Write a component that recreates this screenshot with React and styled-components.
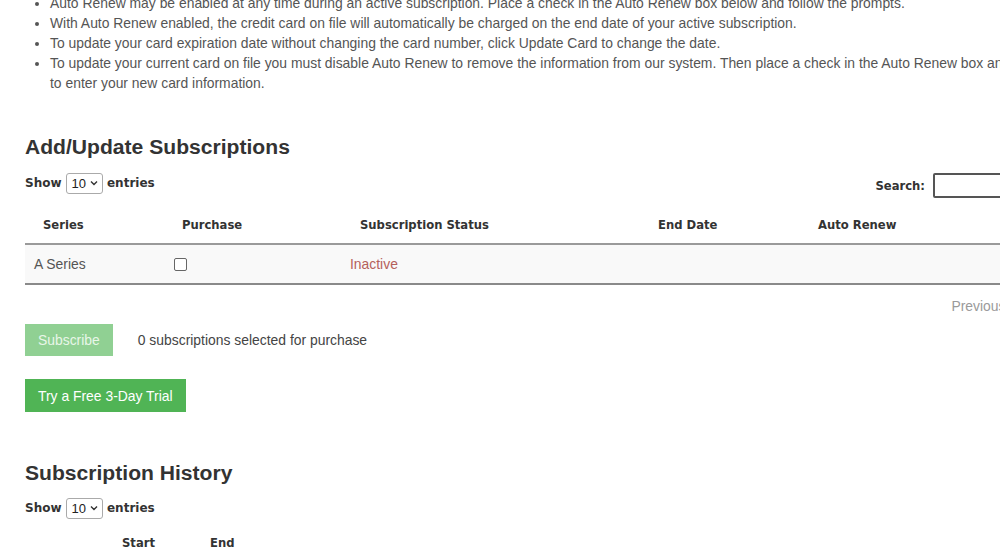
import React from "react";
import styled, { createGlobalStyle } from "styled-components";

const Global = createGlobalStyle`
  html, body { margin: 0; padding: 0; background: #fff; overflow: hidden; }
  body { font-family: "Liberation Sans", Arial, sans-serif; color: #333; }
`;

const Page = styled.div`
  width: 1140px;
  padding: 0 0 0 25px;
  box-sizing: border-box;
`;

const Notes = styled.ul`
  margin: -7px 0 0 0;
  padding: 0 8px 0 25px;
  font-size: 13.9px;
  line-height: 20px;
  color: #555;
`;

const Heading = styled.h2`
  margin: ${(p) => p.$top}px 0 0 0;
  font-family: "Liberation Sans", Arial, sans-serif;
  font-size: 21.1px;
  font-weight: bold;
  line-height: 24px;
  color: #333;
`;

const Controls = styled.div`
  display: flex;
  align-items: center;
  justify-content: space-between;
  margin-top: ${(p) => p.$top}px;
  height: 24px;
`;

const LengthLabel = styled.label`
  display: flex;
  align-items: center;
  gap: 4px;
  font-family: "DejaVu Sans", Verdana, sans-serif;
  font-size: 12px;
  font-weight: bold;
  color: #333;
`;

const FakeSelect = styled.span`
  display: inline-flex;
  align-items: center;
  gap: 4px;
  height: 19px;
  padding: 0 4px 0 5px;
  border: 1px solid #aaa;
  border-radius: 3px;
  font-family: "Liberation Sans", Arial, sans-serif;
  font-size: 13px;
  font-weight: normal;
  color: #222;
  background: #fff;
`;

const SearchLabel = styled.label`
  display: flex;
  align-items: center;
  gap: 8px;
  margin-top: 5px;
  font-family: "DejaVu Sans", Verdana, sans-serif;
  font-size: 11.6px;
  font-weight: bold;
  color: #333;
`;

const SearchInput = styled.span`
  display: block;
  width: 203px;
  height: 21px;
  border: 2px solid #555;
  border-radius: 2px;
  background: #fff;
`;

const Table = styled.div`
  margin-top: ${(p) => p.$top}px;
  width: 100%;
`;

const HeadRow = styled.div`
  display: grid;
  grid-template-columns: ${(p) => p.$cols};
  height: ${(p) => p.$h}px;
  align-items: center;
  border-bottom: ${(p) => (p.$line ? "2px solid #9a9a9a" : "none")};
`;

const Th = styled.div`
  padding-left: ${(p) => p.$pad ?? 18}px;
  font-family: "DejaVu Sans", Verdana, sans-serif;
  font-size: 11.6px;
  font-weight: bold;
  color: #333;
`;

const BodyRow = styled.div`
  display: grid;
  grid-template-columns: ${(p) => p.$cols};
  height: 38px;
  align-items: center;
  background: #f9f9f9;
  border-bottom: 2px solid #8a8a8a;
`;

const Td = styled.div`
  padding-left: ${(p) => p.$pad ?? 9}px;
  font-size: 13.9px;
  color: ${(p) => p.$color || "#555"};
  display: flex;
  align-items: center;
`;

const Check = styled.span`
  display: block;
  width: 11px;
  height: 11px;
  border: 1px solid #666;
  border-radius: 2px;
  background: #fff;
`;

const Pager = styled.div`
  display: flex;
  justify-content: flex-end;
  gap: 10px;
  margin-top: 13px;
  height: 16px;
  padding-right: 96px;
  font-size: 13.9px;
  color: #9a9a9a;
  line-height: 16px;
`;

const ActionRow = styled.div`
  display: flex;
  align-items: center;
  gap: 25px;
  margin-top: ${(p) => p.$top}px;
`;

const Button = styled.button`
  height: ${(p) => p.$h}px;
  padding: 0 ${(p) => p.$px}px;
  border: none;
  border-radius: 0;
  background: ${(p) => (p.$disabled ? "#90d093" : "#50b455")};
  color: ${(p) => (p.$disabled ? "#e8f6e8" : "#fff")};
  font-family: "Liberation Sans", Arial, sans-serif;
  font-size: 13.9px;
`;

const Info = styled.span`
  font-size: 13.9px;
  color: #444;
`;

const subCols = "139px 178px 298px 160px 1fr";
const histCols = "79px 88px 1fr";

export default function App() {
  return (
    <Page>
      <Global />
      <Notes>
        <li>Auto Renew may be enabled at any time during an active subscription. Place a check in the Auto Renew box below and follow the prompts.</li>
        <li>With Auto Renew enabled, the credit card on file will automatically be charged on the end date of your active subscription.</li>
        <li>To update your card expiration date without changing the card number, click Update Card to change the date.</li>
        <li>To update your current card on file you must disable Auto Renew to remove the information from our system. Then place a check in the Auto Renew box and follow the prompts to enter your new card information.</li>
      </Notes>

      <Heading $top={42}>Add/Update Subscriptions</Heading>
      <Controls $top={12}>
        <LengthLabel>
          Show <FakeSelect>10 <Chevron /></FakeSelect> entries
        </LengthLabel>
        <SearchLabel>
          Search: <SearchInput />
        </SearchLabel>
      </Controls>

      <Table $top={11}>
        <HeadRow $cols={subCols} $h={37} $line>
          <Th>Series</Th>
          <Th>Purchase</Th>
          <Th>Subscription Status</Th>
          <Th>End Date</Th>
          <Th>Auto Renew</Th>
        </HeadRow>
        <BodyRow $cols={subCols}>
          <Td>A Series</Td>
          <Td $pad={10}><Check /></Td>
          <Td $pad={8} $color="#b5605b">Inactive</Td>
          <Td />
          <Td />
        </BodyRow>
      </Table>

      <Pager>
        <span>Previous</span>
        <span>Next</span>
      </Pager>

      <ActionRow $top={10}>
        <Button $disabled $h={32} $px={13}>Subscribe</Button>
        <Info>0 subscriptions selected for purchase</Info>
      </ActionRow>
      <ActionRow $top={23}>
        <Button $h={33} $px={13}>Try a Free 3-Day Trial</Button>
      </ActionRow>

      <Heading $top={49}>Subscription History</Heading>
      <Controls $top={11}>
        <LengthLabel>
          Show <FakeSelect>10 <Chevron /></FakeSelect> entries
        </LengthLabel>
      </Controls>
      <Table $top={0}>
        <HeadRow $cols={histCols} $h={46}>
          <Th></Th>
          <Th>Start</Th>
          <Th>End</Th>
        </HeadRow>
      </Table>
    </Page>
  );
}

function Chevron() {
  return (
    <svg width="8" height="6" viewBox="0 0 8 6">
      <path d="M1 1.5 L4 4.5 L7 1.5" fill="none" stroke="#333" strokeWidth="1.4" />
    </svg>
  );
}
